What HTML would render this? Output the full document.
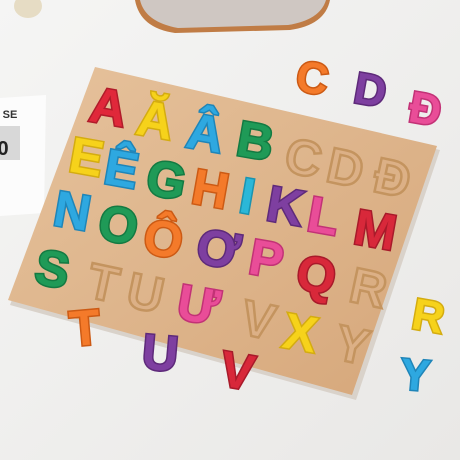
<!DOCTYPE html>
<html><head><style>
html,body{margin:0;padding:0;width:460px;height:460px;overflow:hidden;background:#f1f1f0}
svg{display:block}
text{font-family:"Liberation Sans",sans-serif;font-weight:bold;text-anchor:middle}
</style></head><body>
<svg width="460" height="460" viewBox="0 0 460 460">
<defs>
<linearGradient id="bg" x1="0" y1="0" x2="1" y2="1"><stop offset="0" stop-color="#f5f5f4"/><stop offset="1" stop-color="#e9e8e6"/></linearGradient>
<linearGradient id="wood" x1="0" y1="0" x2="1" y2="1"><stop offset="0" stop-color="#e6c29c"/><stop offset="0.5" stop-color="#deb58c"/><stop offset="1" stop-color="#d6a77a"/></linearGradient>
</defs>
<rect width="460" height="460" fill="url(#bg)"/>
<!-- fluffy top object -->
<path d="M135,0 L330,0 Q325,25 290,30 L175,33 Q140,28 135,0Z" fill="#c07c45"/>
<path d="M140,0 L326,0 Q320,20 288,25 L178,28 Q145,22 140,0Z" fill="#cfc7c2"/>
<ellipse cx="28" cy="6" rx="14" ry="12" fill="#e6dcc4"/>
<!-- left card -->
<polygon points="0,98 46,95 44,213 0,216" fill="#fcfcfc"/>
<text x="10" y="118" font-size="11" fill="#333" font-weight="normal">SE</text>
<rect x="0" y="126" width="20" height="34" fill="#d8d8d8"/>
<text x="3" y="155" font-size="20" fill="#222">0</text>
<!-- board -->
<polygon points="97,72 440,150 356,400 10,305" fill="#d9d2ca"/>
<polygon points="95,67 437,146 352,395 8,300" fill="url(#wood)"/>
<g fill="#dcb086" stroke="#c4945f" stroke-width="2.5">
<text x="303" y="175" font-size="50" transform="rotate(12 303 160)">C</text>
<text x="345" y="185" font-size="50" transform="rotate(12 345 170)">D</text>
<text x="392" y="195" font-size="50" transform="rotate(12 392 180)">Đ</text>
<text x="368" y="305" font-size="50" transform="rotate(12 368 290)">R</text>
<text x="103" y="300" font-size="50" transform="rotate(12 103 285)">T</text>
<text x="145" y="310" font-size="50" transform="rotate(12 145 295)">U</text>
<text x="258" y="337" font-size="50" transform="rotate(12 258 322)">V</text>
<text x="352" y="362" font-size="50" transform="rotate(12 352 347)">Y</text>
</g>
<g stroke-width="3" paint-order="stroke">
<text x="108" y="124" font-size="50" fill="#e0283a" stroke="#b01c2a" transform="rotate(10 108 110)">A</text>
<text x="155" y="137" font-size="50" fill="#f6d21b" stroke="#d4ac10" transform="rotate(10 155 122)">Ă</text>
<text x="205" y="150" font-size="50" fill="#2ea8e0" stroke="#1f85b8" transform="rotate(10 205 135)">Â</text>
<text x="255" y="158" font-size="50" fill="#1f9a57" stroke="#147a42" transform="rotate(10 255 143)">B</text>
<text x="86" y="174" font-size="50" fill="#f6d21b" stroke="#d4ac10" transform="rotate(10 86 160)">E</text>
<text x="121" y="186" font-size="50" fill="#2ea8e0" stroke="#1f85b8" transform="rotate(10 121 172)">Ê</text>
<text x="166" y="197" font-size="50" fill="#1f9a57" stroke="#147a42" transform="rotate(10 166 182)">G</text>
<text x="210" y="206" font-size="50" fill="#f47a2a" stroke="#cc5a14" transform="rotate(10 210 192)">H</text>
<text x="247" y="213" font-size="50" fill="#2bb7d8" stroke="#1a93b0" transform="rotate(10 247 198)">I</text>
<text x="285" y="223" font-size="50" fill="#7e3fa0" stroke="#5e2a7a" transform="rotate(10 285 208)">K</text>
<text x="323" y="233" font-size="50" fill="#e94d98" stroke="#c23276" transform="rotate(10 323 218)">L</text>
<text x="375" y="247" font-size="50" fill="#d8283a" stroke="#a81a2a" transform="rotate(10 375 232)">M</text>
<text x="72" y="228" font-size="50" fill="#2ea8e0" stroke="#1f85b8" transform="rotate(10 72 213)">N</text>
<text x="118" y="242" font-size="50" fill="#1f9a57" stroke="#147a42" transform="rotate(10 118 227)">O</text>
<text x="163" y="256" font-size="50" fill="#f47a2a" stroke="#cc5a14" transform="rotate(10 163 241)">Ô</text>
<text x="218" y="266" font-size="50" fill="#7e3fa0" stroke="#5e2a7a" transform="rotate(10 218 251)">Ơ</text>
<text x="266" y="276" font-size="50" fill="#e94d98" stroke="#c23276" transform="rotate(10 266 261)">P</text>
<text x="316" y="292" font-size="50" fill="#d8283a" stroke="#a81a2a" transform="rotate(10 316 277)">Q</text>
<text x="52" y="286" font-size="50" fill="#1f9a57" stroke="#147a42" transform="rotate(10 52 271)">S</text>
<text x="198" y="322" font-size="50" fill="#e94d98" stroke="#c23276" transform="rotate(10 198 307)">Ư</text>
<text x="300" y="350" font-size="50" fill="#f6d21b" stroke="#d4ac10" transform="rotate(10 300 335)">X</text>
<text x="85" y="345" font-size="50" fill="#f47a2a" stroke="#cc5a14" transform="rotate(-5 85 330)">T</text>
<text x="160" y="370" font-size="50" fill="#7e3fa0" stroke="#5e2a7a" transform="rotate(5 160 355)">U</text>
<text x="237" y="388" font-size="50" fill="#d8283a" stroke="#a81a2a" transform="rotate(10 237 373)">V</text>
<text x="312" y="93" font-size="44" fill="#f47a2a" stroke="#cc5a14" transform="rotate(10 312 80)">C</text>
<text x="370" y="105" font-size="44" fill="#7e3fa0" stroke="#5e2a7a" transform="rotate(10 370 92)">D</text>
<text x="425" y="124" font-size="44" fill="#e94d98" stroke="#c23276" transform="rotate(10 425 111)">Đ</text>
<text x="428" y="331" font-size="44" fill="#f6d21b" stroke="#d4ac10" transform="rotate(10 428 318)">R</text>
<text x="415" y="390" font-size="44" fill="#2ea8e0" stroke="#1f85b8" transform="rotate(5 415 377)">Y</text>
</g>
</svg>
</body></html>
